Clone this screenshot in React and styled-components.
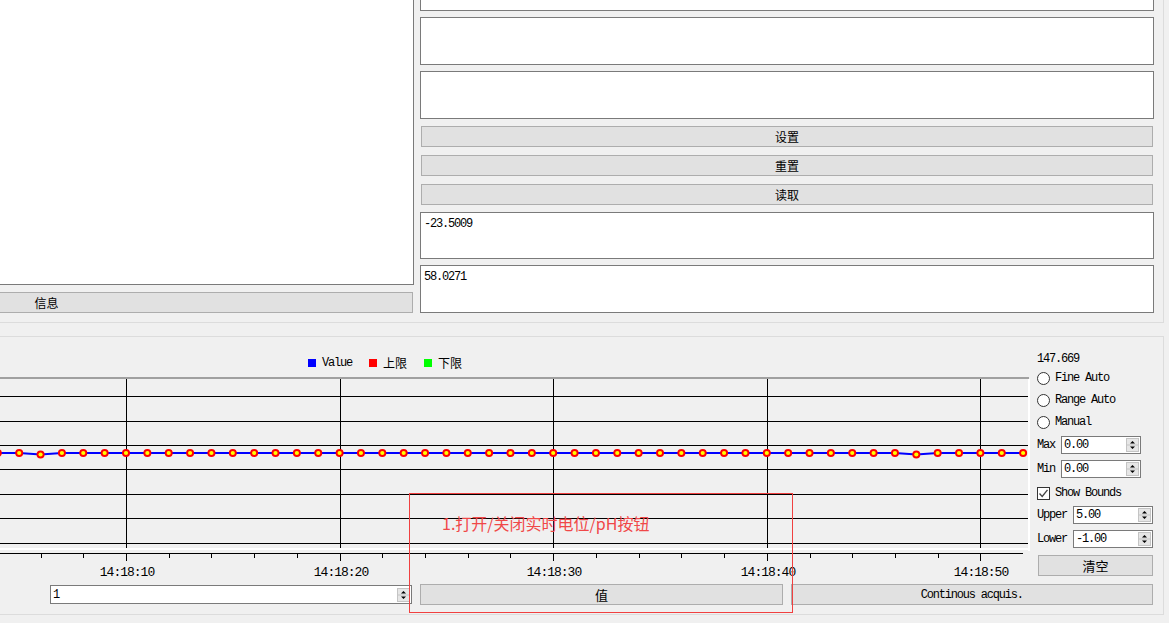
import React from 'react';
import styled, { createGlobalStyle } from 'styled-components';

const MONO = `"Liberation Mono", "DejaVu Sans Mono", monospace`;
const CJK = `"Noto Sans CJK SC", "Noto Sans", sans-serif`;

const Global = createGlobalStyle`
  html, body { margin: 0; padding: 0; background: #f0f0f0; overflow: hidden; }
  body { width: 1169px; height: 623px; font-family: ${CJK}; color: #000; }
`;

const Page = styled.div`
  width: 1490px;
  margin-left: -321px;
  margin-top: -37px;
`;

const TopGroup = styled.section`
  box-sizing: border-box;
  width: 1485px;
  border-right: 1px solid #dcdcdc;
  border-bottom: 1px solid #dcdcdc;
  padding: 0 9px 9px 0;
  display: grid;
  grid-template-columns: 735px 734px;
  column-gap: 6px;
`;

const Column = styled.div`
  display: flex;
  flex-direction: column;
`;

const TextBox = styled.div`
  box-sizing: border-box;
  height: ${p => p.$h}px;
  margin-top: ${p => p.$mt || 0}px;
  background: #fff;
  border: 1px solid #7a7a7a;
  padding: 3px 3px;
  font: 12px/16px ${MONO};
  letter-spacing: -1.2px;
`;

const PushButton = styled.div`
  box-sizing: border-box;
  height: 21px;
  margin: ${p => p.$mt || 0}px 1px 0;
  background: #e1e1e1;
  border: 1px solid #adadad;
  display: flex;
  align-items: center;
  justify-content: center;
  font-family: ${p => (p.$mono ? MONO : CJK)};
  font-size: ${p => (p.$big ? 13 : 12)}px;
  letter-spacing: ${p => (p.$mono ? '-1.2px' : '0')};
`;

const BottomGroup = styled.section`
  position: relative;
  box-sizing: border-box;
  width: 1485px;
  margin-top: 13px;
  border: 1px solid #dcdcdc;
  padding: 0 10px 9px 320px;
`;

const MainArea = styled.div`
  display: flex;
  height: 247px;
`;

const ChartColumn = styled.div`
  width: 1030px;
  display: flex;
  flex-direction: column;
`;

const Legend = styled.div`
  height: 40px;
  box-sizing: border-box;
  padding: 19px 0 0 308px;
  display: flex;
  align-items: flex-start;
  gap: 17px;
`;

const LegendItem = styled.div`
  display: flex;
  align-items: center;
  height: 14px;
  gap: 6px;
`;

const Swatch = styled.span`
  width: 8px;
  height: 8px;
  background: ${p => p.$color};
`;

const LegendLabel = styled.span`
  font-family: ${p => (p.$mono ? MONO : CJK)};
  font-size: 12px;
  letter-spacing: ${p => (p.$mono ? '-1.2px' : '0')};
  line-height: 14px;
`;

const ChartSvg = styled.svg`
  display: block;
`;

const SidePanel = styled.div`
  flex: 1;
  display: flex;
  flex-direction: column;
  padding-left: 7px;
  font: 12px ${MONO};
  letter-spacing: -1.2px;
`;

const Readout = styled.div`
  margin-top: 15px;
  height: 14px;
  line-height: 14px;
`;

const OptionRow = styled.div`
  display: flex;
  align-items: center;
  gap: 5px;
  height: ${p => p.$h}px;
  margin-top: ${p => p.$mt || 0}px;
`;

const Radio = styled.span`
  box-sizing: border-box;
  width: 13px;
  height: 13px;
  border-radius: 50%;
  border: 1px solid #333;
  background: #fff;
`;

const Check = styled.span`
  box-sizing: border-box;
  width: 13px;
  height: 13px;
  border: 1px solid #333;
  background: #fff;
  display: flex;
  align-items: center;
  justify-content: center;
`;

const FieldRow = styled.div`
  display: flex;
  align-items: center;
  margin-top: ${p => p.$mt}px;
`;

const FieldLabel = styled.span`
  width: ${p => p.$w}px;
`;

const SpinFrame = styled.div`
  box-sizing: border-box;
  width: ${p => (p.$w ? `${p.$w}px` : 'auto')};
  height: ${p => p.$h || 18}px;
  border: 1px solid #7a7a7a;
  background: #fff;
  display: flex;
  align-items: center;
  padding: 0 1px 0 2px;
`;

const SpinText = styled.span`
  flex: 1;
  font: 12px ${MONO};
  letter-spacing: -1.2px;
`;

const ClearButton = styled(PushButton)`
  margin: 7px 0 0 1px;
`;

const ControlRow = styled.div`
  display: grid;
  grid-template-columns: 1fr 1fr 1fr;
  column-gap: 8px;
  align-items: center;
  height: 21px;
  padding-left: 50px;
`;

const RowButton = styled(PushButton)`
  margin: 0;
`;

const Callout = styled.div`
  position: absolute;
  left: 729px;
  top: 156px;
  width: 384px;
  height: 120px;
  box-sizing: border-box;
  border: 1px solid #f04040;
  padding: 18px 0 0 32px;
  font: 16px/22px ${CJK};
  color: #f04848;
  pointer-events: none;
`;

function SpinArrows() {
  return (
    <svg width="13" height="14" viewBox="0 0 13 14">
      <rect x="0.5" y="0.5" width="12" height="13" fill="#e6e6e6" stroke="#c4c4c4" />
      <line x1="1" y1="7" x2="12" y2="7" stroke="#c4c4c4" />
      <path d="M4 5.5 L9 5.5 L6.5 3 Z" fill="#000" />
      <path d="M4 8.5 L9 8.5 L6.5 11 Z" fill="#000" />
    </svg>
  );
}

function SpinBox({ value, w, h }) {
  return (
    <SpinFrame $w={w} $h={h}>
      <SpinText>{value}</SpinText>
      <SpinArrows />
    </SpinFrame>
  );
}

const STEP = 21.36;
const X0 = 126;
const gridRows = [396, 421, 445, 469, 494, 518, 543];
const labels = ['14:18:10', '14:18:20', '14:18:30', '14:18:40', '14:18:50'];

function Chart() {
  const top = 377;
  const ly = r => r - top + 0.5;
  const points = [];
  for (let k = -6; k <= 42; k++) {
    const dip = k === -4 || k === 37;
    points.push({ x: X0 + STEP * k, y: dip ? 77.5 : 76 });
  }
  const majors = [0, 1, 2, 3, 4].map(m => Math.round(X0 + STEP * 10 * m) + 0.5);
  const minors = [];
  for (let j = -2; j <= 21; j++) {
    if (j % 5 === 0) continue;
    const x = Math.round(X0 + STEP * 2 * j) + 0.5;
    if (x > 0 && x < 1023) minors.push(x);
  }
  const linePath = points.map((p, i) => `${i ? 'L' : 'M'}${p.x.toFixed(1)} ${p.y}`).join(' ');
  return (
    <ChartSvg width="1030" height="207" viewBox="0 0 1030 207">
      <rect x="0" y="0" width="1029" height="2" fill="#a0a0a0" />
      {gridRows.map(r => (
        <line key={r} x1="0" x2="1028" y1={ly(r)} y2={ly(r)} stroke="#000" strokeWidth="1" />
      ))}
      {majors.map(x => (
        <line key={x} x1={x} x2={x} y1="2" y2="171" stroke="#000" strokeWidth="1" />
      ))}
      <rect x="1028" y="2" width="2" height="172" fill="#ffffff" />
      <rect x="0" y="171" width="1030" height="2" fill="#ffffff" />
      <path d={linePath} fill="none" stroke="#0000ff" strokeWidth="2" />
      {points.map((p, i) => (
        <g key={i}>
          <circle cx={p.x} cy={p.y} r="4" fill="#ff0000" />
          <circle cx={p.x} cy={p.y} r="2.1" fill="#ffff00" />
        </g>
      ))}
      <line x1="0" x2="1023" y1={ly(553)} y2={ly(553)} stroke="#000" strokeWidth="1" />
      {minors.map(x => (
        <line key={x} x1={x} x2={x} y1="176" y2="181" stroke="#000" strokeWidth="1" />
      ))}
      {majors.map(x => (
        <line key={'t' + x} x1={x} x2={x} y1="176" y2="184" stroke="#000" strokeWidth="1" />
      ))}
      {majors.map((x, i) => (
        <text
          key={'l' + x}
          x={x + 0.5}
          y="195"
          textAnchor="middle"
          dominantBaseline="central"
          fontFamily={MONO}
          fontSize="13"
          letterSpacing="-1"
          fill="#000"
        >
          {labels[i]}
        </text>
      ))}
    </ChartSvg>
  );
}

export default function App() {
  return (
    <>
      <Global />
      <Page>
        <TopGroup>
          <Column>
            <TextBox $h={322} />
            <PushButton $mt={7}>信息</PushButton>
          </Column>
          <Column>
            <TextBox $h={48} />
            <TextBox $h={48} $mt={6} />
            <TextBox $h={48} $mt={6} />
            <PushButton $mt={7}>设置</PushButton>
            <PushButton $mt={8}>重置</PushButton>
            <PushButton $mt={8}>读取</PushButton>
            <TextBox $h={47} $mt={7}>-23.5009</TextBox>
            <TextBox $h={48} $mt={6}>58.0271</TextBox>
          </Column>
        </TopGroup>

        <BottomGroup>
          <MainArea>
            <ChartColumn>
              <Legend>
                <LegendItem>
                  <Swatch $color="#0000ff" />
                  <LegendLabel $mono>Value</LegendLabel>
                </LegendItem>
                <LegendItem>
                  <Swatch $color="#ff0000" />
                  <LegendLabel>上限</LegendLabel>
                </LegendItem>
                <LegendItem>
                  <Swatch $color="#00ff00" />
                  <LegendLabel>下限</LegendLabel>
                </LegendItem>
              </Legend>
              <Chart />
            </ChartColumn>

            <SidePanel>
              <Readout>147.669</Readout>
              <OptionRow $h={22} $mt={1}>
                <Radio />
                <span>Fine Auto</span>
              </OptionRow>
              <OptionRow $h={22}>
                <Radio />
                <span>Range Auto</span>
              </OptionRow>
              <OptionRow $h={22}>
                <Radio />
                <span>Manual</span>
              </OptionRow>
              <FieldRow $mt={3}>
                <FieldLabel $w={24}>Max</FieldLabel>
                <SpinBox value="0.00" w={80} />
              </FieldRow>
              <FieldRow $mt={6}>
                <FieldLabel $w={24}>Min</FieldLabel>
                <SpinBox value="0.00" w={80} />
              </FieldRow>
              <OptionRow $h={14} $mt={8}>
                <Check>
                  <svg width="11" height="11" viewBox="0 0 11 11">
                    <path d="M1.5 5.5 L4.2 8.5 L9.5 1.8" fill="none" stroke="#444" strokeWidth="1.3" />
                  </svg>
                </Check>
                <span>Show Bounds</span>
              </OptionRow>
              <FieldRow $mt={6}>
                <FieldLabel $w={36}>Upper</FieldLabel>
                <SpinBox value="5.00" w={80} />
              </FieldRow>
              <FieldRow $mt={6}>
                <FieldLabel $w={36}>Lower</FieldLabel>
                <SpinBox value="-1.00" w={80} />
              </FieldRow>
              <ClearButton $big>清空</ClearButton>
            </SidePanel>
          </MainArea>

          <ControlRow>
            <SpinBox value="1" h={19} />
            <RowButton $big>值</RowButton>
            <RowButton $mono>Continous acquis.</RowButton>
          </ControlRow>

          <Callout>1.打开/关闭实时电位/pH按钮</Callout>
        </BottomGroup>
      </Page>
    </>
  );
}
